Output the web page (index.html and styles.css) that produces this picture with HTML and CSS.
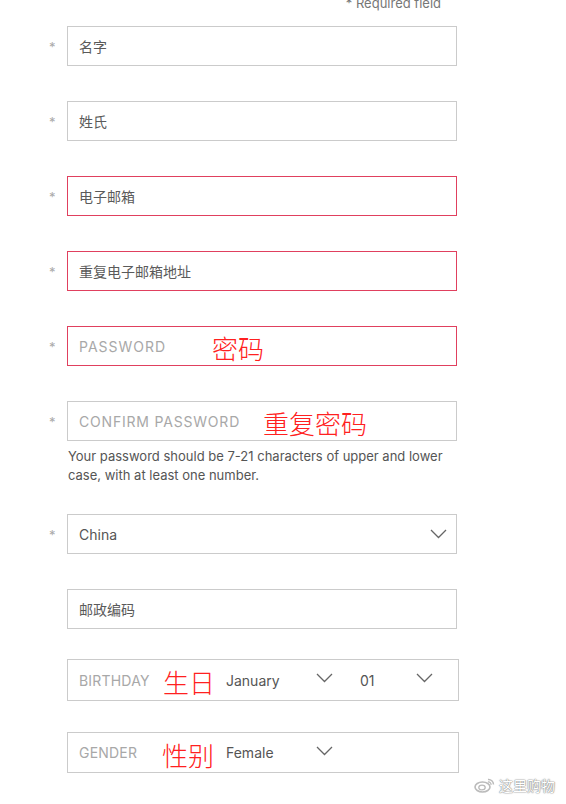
FILE: index.html
```html
<!DOCTYPE html>
<html lang="zh">
<head>
<meta charset="utf-8">
<title>Register</title>
<link rel="stylesheet" href="styles.css">
</head>
<body>
<div class="page">
  <div class="req">* Required field</div>

  <div class="row">
    <span class="star">*</span>
    <div class="field"><span class="ph-cn">名字</span></div>
  </div>
  <div class="row">
    <span class="star">*</span>
    <div class="field"><span class="ph-cn">姓氏</span></div>
  </div>
  <div class="row">
    <span class="star">*</span>
    <div class="field field-error"><span class="ph-cn">电子邮箱</span></div>
  </div>
  <div class="row">
    <span class="star">*</span>
    <div class="field field-error"><span class="ph-cn">重复电子邮箱地址</span></div>
  </div>
  <div class="row">
    <span class="star">*</span>
    <div class="field field-error"><span class="ph-en ph-pass">PASSWORD</span><span class="note">密码</span></div>
  </div>
  <div class="row row-tight">
    <span class="star">*</span>
    <div class="field"><span class="ph-en ph-confirm">CONFIRM PASSWORD</span><span class="note">重复密码</span></div>
  </div>
  <p class="hint">Your password should be 7-21 characters of upper and lower case, with at least one number.</p>

  <div class="row">
    <span class="star">*</span>
    <div class="field field-select">
      <span class="val">China</span>
      <svg class="chev" width="17" height="10" viewBox="0 0 17 10"><path d="M1 1 L8.5 8.5 L16 1" fill="none" stroke="#666" stroke-width="1.3"/></svg>
    </div>
  </div>
  <div class="row row-postal">
    <span class="star"></span>
    <div class="field"><span class="ph-cn">邮政编码</span></div>
  </div>
  <div class="row row-small">
    <span class="star"></span>
    <div class="field field-wide field-bday">
      <span class="ph-en lbl-bday">BIRTHDAY</span>
      <span class="note note-bday">生日</span>
      <span class="sel sel-month"><span class="val">January</span><svg class="chev" width="17" height="10" viewBox="0 0 17 10"><path d="M1 1 L8.5 8.5 L16 1" fill="none" stroke="#666" stroke-width="1.3"/></svg></span>
      <span class="sel sel-day"><span class="val">01</span><svg class="chev" width="17" height="10" viewBox="0 0 17 10"><path d="M1 1 L8.5 8.5 L16 1" fill="none" stroke="#666" stroke-width="1.3"/></svg></span>
    </div>
  </div>
  <div class="row">
    <span class="star"></span>
    <div class="field field-wide field-gender">
      <span class="ph-en lbl-gender">GENDER</span>
      <span class="note note-gender">性别</span>
      <span class="sel sel-month"><span class="val">Female</span><svg class="chev" width="17" height="10" viewBox="0 0 17 10"><path d="M1 1 L8.5 8.5 L16 1" fill="none" stroke="#666" stroke-width="1.3"/></svg></span>
    </div>
  </div>

  <div class="wm">
    <svg class="wm-logo" width="22" height="16" viewBox="0 0 22 16">
      <ellipse cx="8.5" cy="10" rx="7.5" ry="5" fill="none" stroke="#bbb" stroke-width="1.6"/>
      <ellipse cx="8" cy="10.5" rx="3.2" ry="2.4" fill="none" stroke="#bbb" stroke-width="1.3"/>
      <path d="M14 2.5 A5 5 0 0 1 19.5 7.5" fill="none" stroke="#bbb" stroke-width="1.5"/>
      <path d="M14 5 A2.5 2.5 0 0 1 17 7.8" fill="none" stroke="#bbb" stroke-width="1.3"/>
    </svg>
    <span class="wm-text">这里购物</span>
  </div>
</div>
</body>
</html>
```

FILE: styles.css
```css
* { box-sizing: border-box; }
html, body { margin: 0; padding: 0; background: #fff; }
body {
  font-family: Inter, "Noto Sans", "Noto Sans CJK SC", sans-serif;
  color: #555;
  overflow: hidden;
}
.page {
  position: relative;
  width: 566px;
  height: 804px;
}
.req {
  width: 441px;
  margin-top: -5px;
  height: 16px;
  line-height: 16px;
  text-align: right;
  font-size: 13px;
  color: #777;
  margin-bottom: 15px;
}
.row {
  display: flex;
  align-items: center;
  margin-bottom: 35px;
}
.row-tight { margin-bottom: 0; }
.row-postal { margin-bottom: 30px; }
.row-small { margin-bottom: 31px; }
.star {
  width: 67px;
  padding-left: 49px;
  font-size: 13px;
  color: #aaa;
  line-height: 1;
  padding-top: 3px;
}
.field {
  width: 390px;
  height: 40px;
  border: 1px solid #cbcbcb;
  display: flex;
  align-items: center;
  padding-left: 11px;
  padding-right: 9px;
  background: #fff;
}
.field-error { border-color: #e0405e; }
.field-wide { width: 392px; height: 42px; }
.field-gender { height: 41px; }
.ph-cn {
  font-family: "Noto Sans CJK SC", sans-serif;
  font-size: 14px;
  color: #5a5a5a;
}
.ph-en {
  font-size: 14px;
  color: #a8a8a8;
  letter-spacing: 0.2px;
  white-space: nowrap;
}
.ph-pass { width: 133px; letter-spacing: 1px; }
.ph-confirm { width: 184px; letter-spacing: 0.8px; }
.note {
  font-family: "Noto Sans CJK SC", sans-serif;
  font-size: 26px;
  color: #ff2020;
  font-weight: 300;
  line-height: 1;
  padding-top: 4px;
  white-space: nowrap;
}
.hint {
  margin: 6px 0 29px 68px;
  width: 385px;
  font-size: 13px;
  line-height: 19px;
  color: #555;
}
.field-select { justify-content: space-between; }
.val {
  font-size: 14px;
  color: #555;
}
.chev { display: block; }
.lbl-bday { width: 84px; }
.lbl-gender { width: 83px; }
.note-bday { width: 63px; }
.note-gender { width: 64px; }
.sel {
  display: flex;
  align-items: center;
  justify-content: space-between;
}
.sel-month { width: 107px; }
.sel-day { width: 73px; margin-left: 27px; }
.sel .chev { margin-top: -4px; }
.wm {
  position: absolute;
  left: 474px;
  top: 780px;
  display: flex;
  align-items: center;
  gap: 3px;
}
.wm-text {
  font-family: "Noto Sans CJK SC", sans-serif;
  font-size: 14px;
  color: #fff;
  text-shadow: 0 0 1px #888, 0 0 1px #888, 0 0 2px #aaa;
}
```
